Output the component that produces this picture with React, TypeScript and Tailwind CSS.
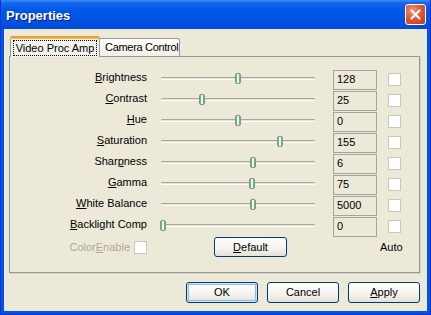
import React from 'react';

type Row = { label: string; u: number; value: string; thumb: number };

const rows: Row[] = [
  { label: 'Brightness', u: 0, value: '128', thumb: 78 },
  { label: 'Contrast', u: 0, value: '25', thumb: 42 },
  { label: 'Hue', u: 0, value: '0', thumb: 78 },
  { label: 'Saturation', u: 0, value: '155', thumb: 120 },
  { label: 'Sharpness', u: 4, value: '6', thumb: 93 },
  { label: 'Gamma', u: 0, value: '75', thumb: 92 },
  { label: 'White Balance', u: 0, value: '5000', thumb: 93 },
  { label: 'Backlight Comp', u: 0, value: '0', thumb: 3 },
];

// underline the access-key letter
const Mnemonic = ({ text, u }: { text: string; u: number }) => (
  <>
    {text.slice(0, u)}
    <span className="underline underline-offset-[1px]">{text[u]}</span>
    {text.slice(u + 1)}
  </>
);

const XpButton = ({ children, focused }: { children: React.ReactNode; focused?: boolean }) => (
  <div
    className={
      'w-[72px] h-[21px] rounded-[3px] border border-[#003c74] flex items-center justify-center text-black bg-[linear-gradient(to_bottom,#ffffff_0%,#f4f3ee_60%,#e3e0d5_100%)] ' +
      (focused ? 'shadow-[inset_0_0_0_1px_#cee7ff,inset_0_0_0_2px_#98b8ea]' : '')
    }
  >
    {children}
  </div>
);

const Checkbox = () => (
  <div className="w-[13px] h-[13px] bg-white border border-[#cac8bb]" />
);

const Slider = ({ thumb }: { thumb: number }) => (
  <div className="relative w-[156px] h-full flex items-center pb-[2px]">
    <div className="mx-[1px] w-full h-[3px] rounded-[1px] border-t border-[#aca899] border-b border-b-white bg-[#e4e2d8]" />
    <div
      className="absolute top-[4px] w-[6px] h-[11px] rounded-[2px] border border-[#7a9a86] bg-[linear-gradient(to_right,#2c9647_0%,#f6f6f2_38%,#f6f6f2_62%,#2c9647_100%)]"
      style={{ left: thumb - 3 }}
    />
  </div>
);

export default function App() {
  return (
    <div className="w-[431px] h-[315px] flex flex-col bg-[#0054e3] border-x border-b border-[#0831d9] font-['Liberation_Sans',Arial,sans-serif] text-[11px] text-black">
      {/* title bar */}
      <div className="h-[29px] shrink-0 flex items-center justify-between pl-[5px] pr-[4px] bg-[linear-gradient(to_bottom,#3c8ef8_0%,#1466ec_10%,#0058e6_35%,#0054e3_70%,#004ad9_100%)]">
        <span className="text-white font-bold text-[13px] pt-[2px] [text-shadow:1px_1px_0_#0a1883]">Properties</span>
        <div className="w-[21px] h-[21px] rounded-[3px] border border-white flex items-center justify-center bg-[radial-gradient(circle_at_35%_30%,#f29a7e_0%,#e0593a_45%,#c3381a_100%)]">
          <svg width="13" height="13" viewBox="0 0 13 13">
            <path d="M2.5 2.5 L10.5 10.5 M10.5 2.5 L2.5 10.5" stroke="white" strokeWidth="2.2" strokeLinecap="round" />
          </svg>
        </div>
      </div>

      {/* client area */}
      <div className="flex-1 mx-[3px] mb-[3px] bg-[#ece9d8] flex flex-col">
        {/* tabs */}
        <div className="flex items-end ml-[6px] mt-[7px] h-[21px] -mb-[1px] relative z-10 whitespace-nowrap">
          <div className="w-[90px] h-[21px] flex flex-col bg-[#f3f2ec] border-x border-[#919b9c] rounded-t-[3px]">
            <div className="h-[3px] -mx-[1px] rounded-t-[3px] bg-[linear-gradient(to_bottom,#e68b2c,#ffc83c)]" />
            <div className="flex-1 flex items-center justify-center pb-[1px]">
              <span className="px-[2px] py-[1px] border border-dotted border-black leading-[12px]">Video Proc Amp</span>
            </div>
          </div>
          <div className="w-[80px] h-[18px] mb-[1px] flex items-center pl-[5px] tracking-[-0.3px] border-t border-r border-[#919b9c] rounded-tr-[3px] bg-[linear-gradient(to_bottom,#ffffff,#f1efe6)]">
            Camera Control
          </div>
        </div>

        {/* tab page */}
        <div className="ml-[5px] w-[411px] h-[217px] border border-[#919b9c] shadow-[1px_1px_0_#d6d3c4] pt-[12px] flex flex-col">
          {rows.map((r) => (
            <div key={r.label} className="h-[21px] flex items-center">
              <div className="w-[137px] text-right pb-[5px]">
                <Mnemonic text={r.label} u={r.u} />
              </div>
              <div className="ml-[13px] h-full">
                <Slider thumb={r.thumb} />
              </div>
              <div className="ml-[17px] w-[44px] h-[20px] border border-[#a5a49a] flex items-center pl-[3px]">
                {r.value}
              </div>
              <div className="ml-[11px]">
                <Checkbox />
              </div>
            </div>
          ))}

          <div className="h-[20px] flex items-center">
            <div className="w-[137px] flex items-center justify-end">
              <span className="text-[#aca899] mr-[4px]">
                <Mnemonic text="ColorEnable" u={5} />
              </span>
              <Checkbox />
            </div>
            <div className="ml-[67px]">
              <div className="w-[73px] h-[20px] rounded-[3px] border border-[#003c74] flex items-center justify-center bg-[linear-gradient(to_bottom,#ffffff_0%,#f4f3ee_60%,#e3e0d5_100%)]">
                <Mnemonic text="Default" u={0} />
              </div>
            </div>
            <span className="ml-[93px]">Auto</span>
          </div>
        </div>

        {/* dialog buttons */}
        <div className="mt-[9px] flex justify-end gap-[9px] mr-[7px]">
          <XpButton focused>OK</XpButton>
          <XpButton>Cancel</XpButton>
          <XpButton>
            <Mnemonic text="Apply" u={0} />
          </XpButton>
        </div>
      </div>
    </div>
  );
}
